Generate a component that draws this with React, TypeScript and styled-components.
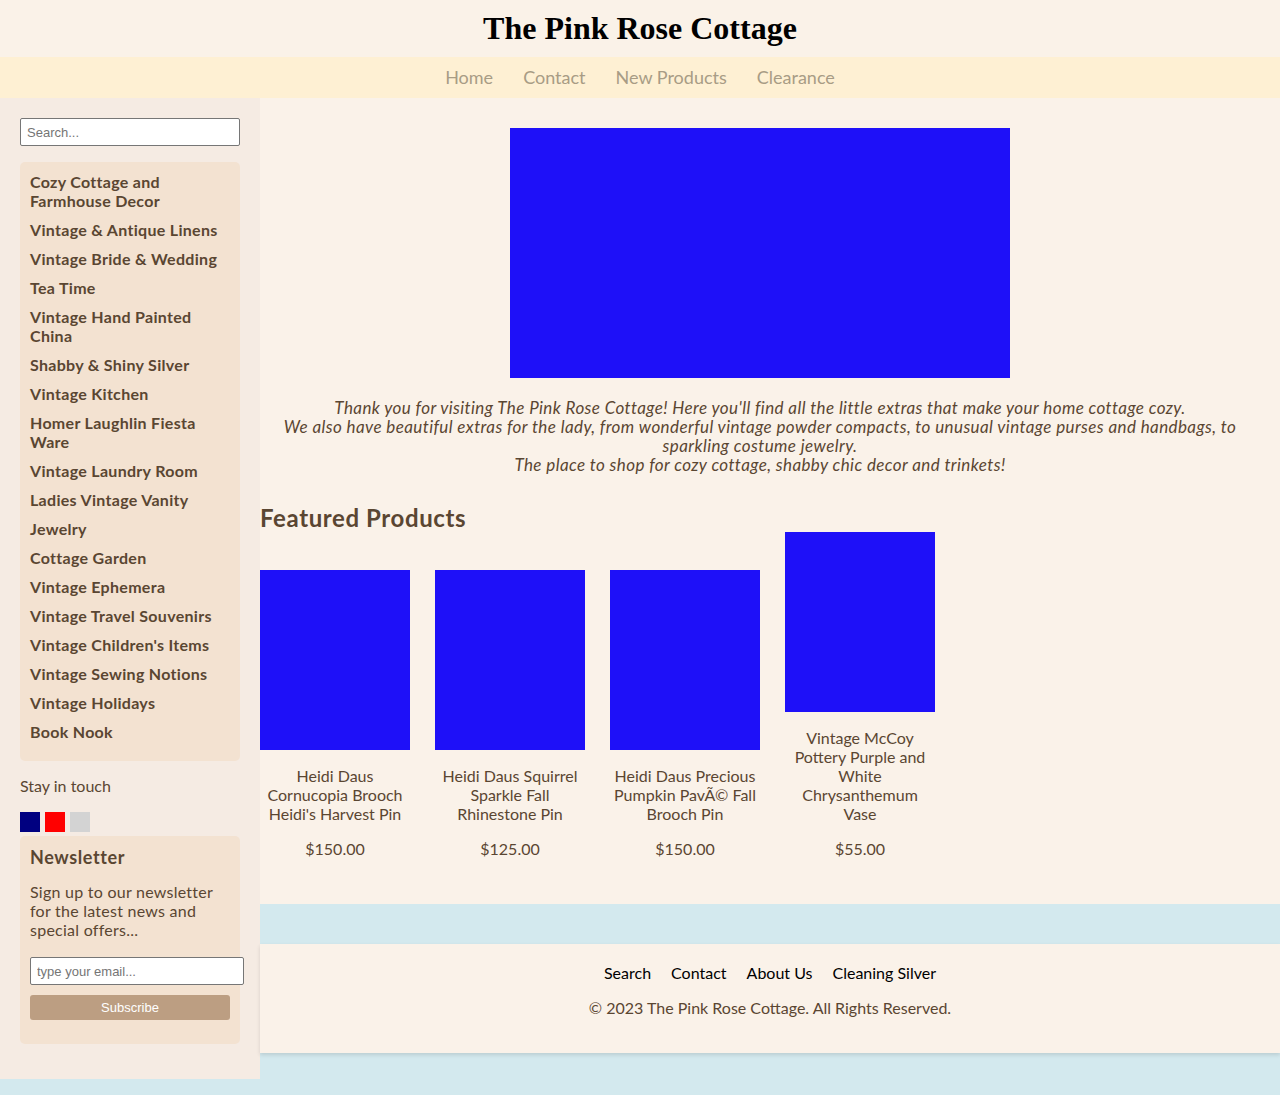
import React from "react";
import styled, { createGlobalStyle } from "styled-components";

const FONT = `"Lato", "Liberation Sans", sans-serif`;
const BROWN = "#5a4632";

const Global = createGlobalStyle`
  html, body { margin: 0; padding: 0; }
  body {
    background: #d3e9ee;
    font-family: ${FONT};
    font-size: 16px;
    color: ${BROWN};
  }
  * { box-sizing: content-box; }
`;

const Header = styled.header`
  background: #faf2e8;
  height: 57px;
  display: flex;
  align-items: center;
  justify-content: center;
`;

const Title = styled.h1`
  margin: 0;
  font-family: "Liberation Serif", "Times New Roman", serif;
  font-weight: bold;
  font-size: 32px;
  color: #000;
`;

const Nav = styled.nav`
  background: #fef0d3;
  height: 41px;
  display: flex;
  align-items: center;
  justify-content: center;
  gap: 30px;
`;

const NavLink = styled.a`
  color: #a89c85;
  font-size: 18px;
  line-height: 20px;
  margin-top: -2px;
  text-decoration: none;
`;

const Body = styled.div`
  display: flex;
  align-items: flex-start;
`;

const Sidebar = styled.aside`
  width: 220px;
  flex-shrink: 0;
  background: #f5ebe3;
  padding: 20px 20px 35px;
`;

const SearchInput = styled.input`
  display: block;
  width: 206px;
  height: 16px;
  padding: 5px 6px;
  border: 1px solid #767676;
  border-radius: 2px;
  font-family: "Liberation Sans", Arial, sans-serif;
  font-size: 13px;
  background: #fff;
  &::placeholder { color: #757575; }
`;

const CategoryBox = styled.ul`
  list-style: none;
  margin: 16px 0 0;
  padding: 10px;
  background: #f3e2d1;
  border-radius: 5px;
`;

const CategoryItem = styled.li`
  font-weight: bold;
  font-size: 16px;
  line-height: 19px;
  letter-spacing: 0.3px;
  padding-bottom: 10px;
  margin: 0;
`;

const StayTitle = styled.p`
  margin: 15px 0 17px;
  font-size: 16px;
  line-height: 19px;
`;

const SocialRow = styled.div`
  display: flex;
  gap: 5px;
`;

const Social = styled.span<{ $c: string }>`
  display: block;
  width: 20px;
  height: 20px;
  background: ${(p) => p.$c};
`;

const NewsBox = styled.div`
  margin-top: 4px;
  background: #f3e2d1;
  border-radius: 5px;
  padding: 10px 10px 24px;
`;

const NewsTitle = styled.h3`
  margin: 0;
  font-size: 18px;
  line-height: 22px;
  letter-spacing: 0.6px;
  font-weight: bold;
`;

const NewsText = styled.p`
  margin: 14px 0 18px;
  line-height: 19px;
  letter-spacing: 0.25px;
`;

const EmailInput = styled.input`
  display: block;
  width: 200px;
  height: 16px;
  padding: 5px 6px;
  border: 1px solid #767676;
  border-radius: 2px;
  font-family: "Liberation Sans", Arial, sans-serif;
  font-size: 13px;
  background: #fff;
  &::placeholder { color: #757575; }
`;

const SubscribeBtn = styled.button`
  display: block;
  margin-top: 10px;
  width: 200px;
  height: 25px;
  padding: 0;
  border: none;
  border-radius: 3px;
  background: #bc9e82;
  color: #fff;
  font-family: "Liberation Sans", Arial, sans-serif;
  font-size: 13px;
`;

const Right = styled.div`
  flex: 1;
  display: flex;
  flex-direction: column;
`;

const Main = styled.main`
  background: #faf2e9;
  padding: 30px 20px 30px 0;
`;

const Hero = styled.div`
  width: 500px;
  height: 250px;
  margin: 0 auto;
  background: #1e10f8;
`;

const Intro = styled.p`
  margin: 20px 0 0;
  text-align: center;
  font-style: italic;
  font-size: 17px;
  letter-spacing: 0.4px;
  line-height: 19px;
`;

const SectionTitle = styled.h2`
  margin: 30px 0 0;
  font-size: 24px;
  line-height: 28px;
  letter-spacing: 0.6px;
  font-weight: bold;
`;

const Products = styled.div`
  display: flex;
  align-items: flex-end;
  gap: 25px;
`;

const Card = styled.div`
  width: 150px;
  text-align: center;
`;

const CardImg = styled.div`
  width: 150px;
  height: 180px;
  background: #1e10f8;
`;

const CardTitle = styled.p`
  margin: 16px 0;
  line-height: 19px;
`;

const Price = styled.p`
  margin: 16px 0;
  line-height: 19px;
`;

const Footer = styled.footer`
  margin-top: 40px;
  background: #faf2e9;
  padding: 19px 0 36px;
  text-align: center;
  box-shadow: 0 2px 4px rgba(0, 0, 0, 0.12);
`;

const FooterLinks = styled.div`
  display: flex;
  justify-content: center;
  gap: 20px;
`;

const FooterLink = styled.a`
  color: #000;
  text-decoration: none;
  line-height: 19px;
`;

const Copy = styled.p`
  margin: 16px 0 0;
  line-height: 19px;
`;

const categories = [
  "Cozy Cottage and Farmhouse Decor",
  "Vintage & Antique Linens",
  "Vintage Bride & Wedding",
  "Tea Time",
  "Vintage Hand Painted China",
  "Shabby & Shiny Silver",
  "Vintage Kitchen",
  "Homer Laughlin Fiesta Ware",
  "Vintage Laundry Room",
  "Ladies Vintage Vanity",
  "Jewelry",
  "Cottage Garden",
  "Vintage Ephemera",
  "Vintage Travel Souvenirs",
  "Vintage Children's Items",
  "Vintage Sewing Notions",
  "Vintage Holidays",
  "Book Nook",
];

const products = [
  { title: "Heidi Daus Cornucopia Brooch Heidi's Harvest Pin", price: "$150.00" },
  { title: "Heidi Daus Squirrel Sparkle Fall Rhinestone Pin", price: "$125.00" },
  { title: "Heidi Daus Precious Pumpkin PavÃ© Fall Brooch Pin", price: "$150.00" },
  { title: "Vintage McCoy Pottery Purple and White Chrysanthemum Vase", price: "$55.00" },
];

export default function App() {
  return (
    <>
      <Global />
      <Header>
        <Title>The Pink Rose Cottage</Title>
      </Header>
      <Nav>
        <NavLink>Home</NavLink>
        <NavLink>Contact</NavLink>
        <NavLink>New Products</NavLink>
        <NavLink>Clearance</NavLink>
      </Nav>
      <Body>
        <Sidebar>
          <SearchInput placeholder="Search..." />
          <CategoryBox>
            {categories.map((c) => (
              <CategoryItem key={c}>{c}</CategoryItem>
            ))}
          </CategoryBox>
          <StayTitle>Stay in touch</StayTitle>
          <SocialRow>
            <Social $c="#000080" />
            <Social $c="#ff0000" />
            <Social $c="#d3d3d3" />
          </SocialRow>
          <NewsBox>
            <NewsTitle>Newsletter</NewsTitle>
            <NewsText>Sign up to our newsletter for the latest news and special offers...</NewsText>
            <EmailInput placeholder="type your email..." />
            <SubscribeBtn>Subscribe</SubscribeBtn>
          </NewsBox>
        </Sidebar>
        <Right>
          <Main>
            <Hero />
            <Intro>
              Thank you for visiting The Pink Rose Cottage! Here you'll find all the little extras that make your home cottage cozy.
              <br />
              We also have beautiful extras for the lady, from wonderful vintage powder compacts, to unusual vintage purses and handbags, to sparkling costume jewelry.
              <br />
              The place to shop for cozy cottage, shabby chic decor and trinkets!
            </Intro>
            <SectionTitle>Featured Products</SectionTitle>
            <Products>
              {products.map((p) => (
                <Card key={p.title}>
                  <CardImg />
                  <CardTitle>{p.title}</CardTitle>
                  <Price>{p.price}</Price>
                </Card>
              ))}
            </Products>
          </Main>
          <Footer>
            <FooterLinks>
              <FooterLink>Search</FooterLink>
              <FooterLink>Contact</FooterLink>
              <FooterLink>About Us</FooterLink>
              <FooterLink>Cleaning Silver</FooterLink>
            </FooterLinks>
            <Copy>© 2023 The Pink Rose Cottage. All Rights Reserved.</Copy>
          </Footer>
        </Right>
      </Body>
    </>
  );
}
